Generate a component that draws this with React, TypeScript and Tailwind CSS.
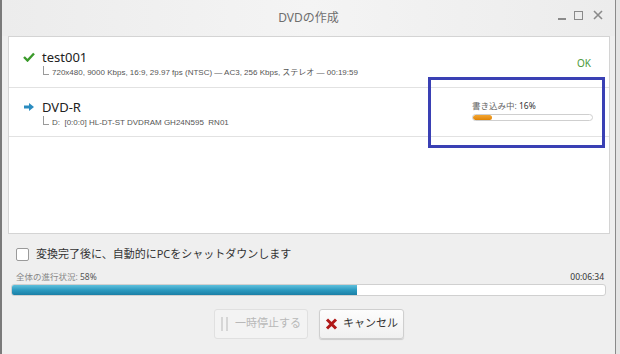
import React from "react";

const font = { fontFamily: '"Noto Sans", "Noto Sans CJK JP", sans-serif' };
const narrow = { fontFamily: '"Liberation Sans", "Noto Sans CJK JP", sans-serif' };

export default function App() {
  return (
    <div className="relative w-[620px] h-[354px] overflow-hidden bg-[#7a7a7a]" style={font}>
      <div className="absolute left-[2px] top-0 w-[613px] h-[354px] bg-[#efefef] flex flex-col">
        {/* title bar */}
        <div className="relative h-[36px] flex items-center justify-center bg-gradient-to-r from-[#ececec] via-[#f4f4f4] to-[#ececec]">
          <span className="text-[12px] text-[#6e6e6e] mt-[-1px]">DVDの作成</span>
          <div className="absolute right-[12px] top-[10px] flex items-center gap-[8px] text-[#8a8a8a]">
            <div className="w-[8px] h-[2px] bg-[#8a8a8a] mt-[8px]" />
            <div className="w-[9px] h-[9px] border border-[#8a8a8a]" />
            <svg width="10" height="10" viewBox="0 0 10 10" className="ml-[2px]">
              <path d="M1 1 L9 9 M9 1 L1 9" stroke="#8a8a8a" strokeWidth="1.6" />
            </svg>
          </div>
        </div>
        {/* panel */}
        <div className="ml-[6px] w-[602px] h-[198px] bg-white border border-[#d4d4d4] flex flex-col">
          <div className="h-[51px] border-b border-[#e2e2e2] flex">
            <div className="flex-1 pl-[14px] pt-[12px]">
              <div className="flex items-center">
                <svg width="12" height="10" viewBox="0 0 12 10" className="mr-[7px]">
                  <path d="M1 5 L4.5 8.5 L11 1.5" stroke="#3a9a2a" strokeWidth="2.4" fill="none" />
                </svg>
                <span className="text-[13px] text-[#222] leading-[16px]">test001</span>
              </div>
              <div className="flex items-end ml-[20px] mt-[1px]">
                <div className="w-[6px] h-[9px] border-l border-b border-[#9a9a9a] mb-[4px] mr-[3px]" />
                <span className="text-[8px] text-[#555] leading-[12px]" style={narrow}>720x480, 9000 Kbps, 16:9, 29.97 fps (NTSC) — AC3, 256 Kbps, ステレオ — 00:19:59</span>
              </div>
            </div>
            <div className="w-[64px] pt-[19px] pl-[32px] text-[10px] text-[#4d9a3a]">OK</div>
          </div>
          <div className="h-[49px] border-b border-[#e2e2e2] flex">
            <div className="flex-1 pl-[14px] pt-[11px]">
              <div className="flex items-center">
                <svg width="10" height="8" viewBox="0 0 10 8" className="mr-[8px] ml-[1px]">
                  <path d="M0 2.5 H5 V0 L10 4 L5 8 V5.5 H0 Z" fill="#2a8cc0" />
                </svg>
                <span className="text-[13px] text-[#222] leading-[16px]">DVD-R</span>
              </div>
              <div className="flex items-end ml-[20px] mt-[1px]">
                <div className="w-[6px] h-[9px] border-l border-b border-[#9a9a9a] mb-[4px] mr-[3px]" />
                <span className="text-[8px] text-[#555] leading-[12px]" style={narrow}>D:&nbsp; [0:0:0] HL-DT-ST DVDRAM GH24N595&nbsp; RN01</span>
              </div>
            </div>
            <div className="w-[138px] pt-[12px] pl-[1px]">
              <div className="text-[8.5px] leading-[11px]">
                <span className="text-[#666]">書き込み中: </span>
                <span className="text-[#333]">16%</span>
              </div>
              <div className="mt-[3px] w-[121px] h-[7px] rounded-full border border-[#cfcfcf] bg-white overflow-hidden">
                <div className="h-full w-[19px] rounded-full bg-gradient-to-b from-[#f3a630] to-[#e08400]" />
              </div>
            </div>
          </div>
        </div>
        {/* checkbox */}
        <div className="flex items-center ml-[14px] mt-[12px]">
          <div className="w-[13px] h-[13px] rounded-[2px] border border-[#9a9a9a] bg-white" />
          <span className="ml-[7px] text-[11px] text-[#333]">変換完了後に、自動的にPCをシャットダウンします</span>
        </div>
        {/* overall progress */}
        <div className="flex justify-between items-end ml-[14px] mr-[11px] mt-[8px] text-[8.5px] leading-[11px]">
          <span>
            <span className="text-[#888]">全体の進行状況: </span>
            <span className="text-[#555]">58%</span>
          </span>
          <span className="text-[#333]">00:06:34</span>
        </div>
        <div className="ml-[9px] mt-[2px] w-[595px] h-[12px] rounded-[3px] border border-[#d0d0d0] bg-white overflow-hidden">
          <div className="h-full w-[345px] bg-gradient-to-b from-[#5ec0dc] via-[#2b9ac0] to-[#1a7fa6]" />
        </div>
        {/* buttons */}
        <div className="flex justify-center gap-[11px] mt-[13px] ml-[1px]">
          <div className="w-[94px] h-[30px] rounded-[3px] border border-[#e0e0e0] bg-[#f3f3f3] flex items-center justify-center gap-[7px]">
            <div className="flex gap-[3px]">
              <div className="w-[2px] h-[14px] bg-[#d6d6d6]" />
              <div className="w-[2px] h-[14px] bg-[#d6d6d6]" />
            </div>
            <span className="text-[11px] text-[#b8b8b8]">一時停止する</span>
          </div>
          <div className="w-[85px] h-[30px] rounded-[3px] border border-[#cfcfcf] bg-gradient-to-b from-[#fdfdfd] to-[#f0f0f0] shadow-[0_1px_1px_rgba(0,0,0,0.15)] flex items-center justify-center gap-[5px]">
            <svg width="13" height="12" viewBox="0 0 13 12">
              <path d="M2 1.5 L11 10.5 M11 1.5 L2 10.5" stroke="#b01818" strokeWidth="3" />
            </svg>
            <span className="text-[11px] text-[#333]">キャンセル</span>
          </div>
        </div>
      </div>
      <div className="absolute left-[615px] top-0 w-[5px] h-[354px] bg-[#e4e4e4] border-l border-[#8a8a8a]" />
      {/* annotation rectangle */}
      <div className="absolute left-[428px] top-[77px] w-[177px] h-[71px] border-[3px] border-[#3a40b4]" />
    </div>
  );
}
